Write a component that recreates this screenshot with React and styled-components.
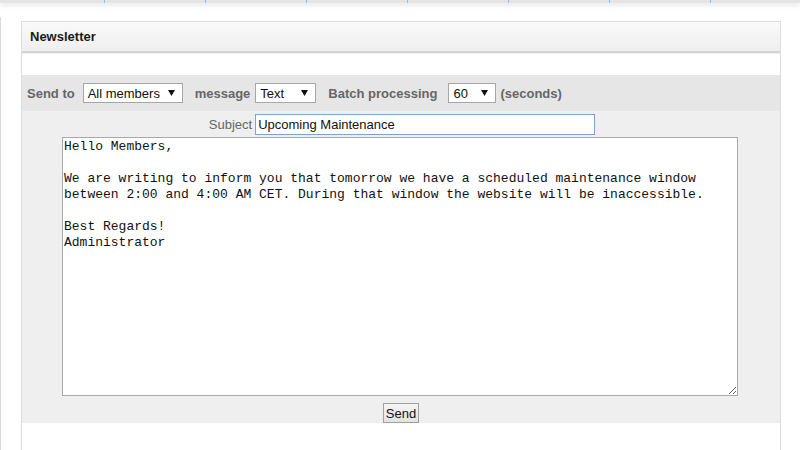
import React from 'react';
import styled, { createGlobalStyle } from 'styled-components';

const GlobalStyle = createGlobalStyle`
  html, body {
    margin: 0;
    padding: 0;
    background: #ffffff;
    font-family: "Liberation Sans", Arial, sans-serif;
    font-size: 13px;
    color: #222;
    overflow: hidden;
  }
`;

const TopNav = styled.div`
  display: flex;
  height: 3px;
  padding-left: 4px;
  background: #e4e4e4;
  box-shadow: 0 2px 5px rgba(0, 0, 0, 0.14);
  overflow: hidden;
`;

const NavItem = styled.div`
  flex-shrink: 0;
  width: 100px;
  border-right: 1px solid #8cc0e6;
`;

const Content = styled.div`
  margin-top: 14px;
  padding: 4px 19px 0 20px;
  border-left: 1px solid #d8d8d8;
  height: 440px;
`;

const Panel = styled.div`
  width: 758px;
  border: 1px solid #dddddd;
  border-bottom: none;
  height: 440px;
`;

const PanelHeader = styled.div`
  height: 29px;
  display: flex;
  align-items: center;
  padding-left: 8px;
  background: linear-gradient(#f9f9f9, #efefef);
  border-bottom: 2px solid #d4d4d4;
  box-shadow: 0 1px 0 #eeeeee;
  font-weight: bold;
  font-size: 13px;
  color: #1a1a1a;
`;

const Spacer = styled.div`
  height: 22px;
`;

const Toolbar = styled.div`
  height: 36px;
  display: flex;
  align-items: center;
  padding-left: 5px;
  background: #e6e6e6;
`;

const Label = styled.span`
  font-weight: bold;
  color: #666666;
  margin-right: ${(p) => p.$after}px;
`;

const SelectBox = styled.div`
  box-sizing: border-box;
  width: ${(p) => p.$width}px;
  height: 20px;
  margin-right: ${(p) => p.$after}px;
  display: flex;
  align-items: center;
  justify-content: space-between;
  padding: 0 7px 0 4px;
  background: #ffffff;
  border: 1px solid #a6a6a6;
  color: #111;
`;

const Form = styled.div`
  background: #efefef;
  display: flex;
  flex-direction: column;
  align-items: center;
  padding-top: 3px;
`;

const SubjectRow = styled.div`
  display: flex;
  align-items: center;
  gap: 3px;
  margin-left: 2px;
`;

const SubjectLabel = styled.label`
  color: #666666;
`;

const SubjectInput = styled.input`
  box-sizing: border-box;
  width: 340px;
  height: 21px;
  padding: 0 2px;
  border: 1px solid #7ea3cf;
  font-family: "Liberation Sans", Arial, sans-serif;
  font-size: 13px;
  color: #111;
  outline: none;
`;

const Body = styled.textarea`
  box-sizing: border-box;
  width: 676px;
  height: 259px;
  margin: 2px 2px 0 0;
  padding: 1px 0 1px 1px;
  border: 1px solid #a9a9a9;
  font-family: "Liberation Mono", "Courier New", monospace;
  font-size: 13px;
  line-height: 16px;
  color: #111;
  resize: both;
  outline: none;
`;

const SendButton = styled.button`
  margin-top: 7px;
  height: 20px;
  padding: 0 2px;
  border: 1px solid #a0a0a0;
  background: linear-gradient(#f6f6f6, #e2e2e2);
  font-family: "Liberation Sans", Arial, sans-serif;
  font-size: 13px;
  color: #111;
`;

const Arrow = () => (
  <svg width="7" height="6" viewBox="0 0 7 6">
    <path d="M0 0 H7 L3.5 6 Z" fill="#111" />
  </svg>
);

const message = `Hello Members,

We are writing to inform you that tomorrow we have a scheduled maintenance window
between 2:00 and 4:00 AM CET. During that window the website will be inaccessible.

Best Regards!
Administrator`;

const App = () => {
  return (
    <>
      <GlobalStyle />
      <TopNav>
        {[0, 1, 2, 3, 4, 5, 6, 7].map((i) => (
          <NavItem key={i} />
        ))}
      </TopNav>
      <Content>
        <Panel>
          <PanelHeader>Newsletter</PanelHeader>
          <Spacer />
          <Toolbar>
            <Label $after={8}>Send to</Label>
            <SelectBox $width={100} $after={12}>
              <span>All members</span>
              <Arrow />
            </SelectBox>
            <Label $after={5}>message</Label>
            <SelectBox $width={61} $after={12}>
              <span>Text</span>
              <Arrow />
            </SelectBox>
            <Label $after={11}>Batch processing</Label>
            <SelectBox $width={48} $after={4}>
              <span>60</span>
              <Arrow />
            </SelectBox>
            <Label $after={0}>(seconds)</Label>
          </Toolbar>
          <Form>
            <SubjectRow>
              <SubjectLabel>Subject</SubjectLabel>
              <SubjectInput defaultValue="Upcoming Maintenance" />
            </SubjectRow>
            <Body defaultValue={message} spellCheck={false} />
            <SendButton>Send</SendButton>
          </Form>
        </Panel>
      </Content>
    </>
  );
};

export default App;
